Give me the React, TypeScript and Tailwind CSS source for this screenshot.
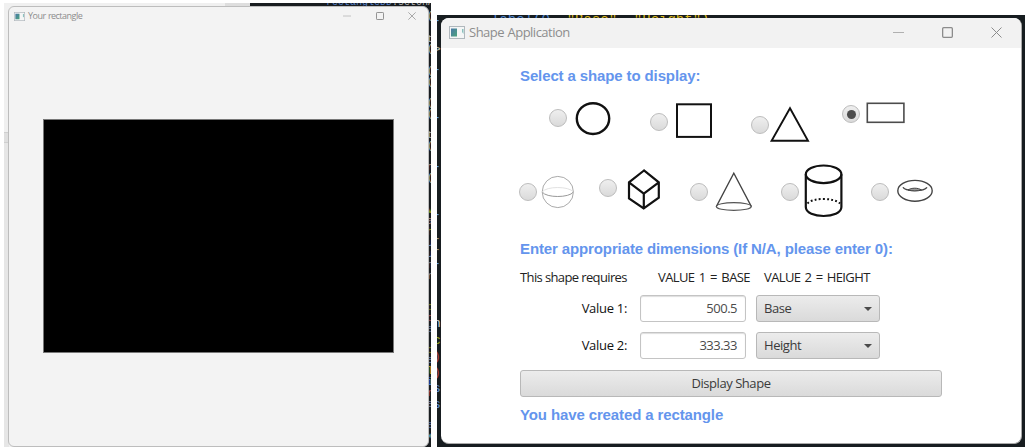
import type { ReactNode } from "react";

const uiFont = "font-['Open_Sans','Noto_Sans',sans-serif]";
const headingText =
  "flex h-5 items-center whitespace-nowrap font-['Liberation_Sans',Arial,sans-serif] text-[15px] font-bold tracking-[-0.12px] text-[#6495ed]";

function AppIcon({ className }: { className: string }) {
  return (
    <svg className={className} viewBox="0 0 16 13" preserveAspectRatio="none">
      <defs>
        <linearGradient id="app-icon" x1="0" y1="0" x2="1" y2="1">
          <stop offset="0" stopColor="#4a78a8" />
          <stop offset="1" stopColor="#4ba47c" />
        </linearGradient>
      </defs>
      <rect x="0.5" y="0.5" width="15" height="12" fill="#f4f6f6" stroke="#b0b8bd" />
      <rect x="2" y="2.5" width="6" height="8" fill="url(#app-icon)" />
      <path d="M13 3h1.5v5L13 6z" fill="#8ac0bd" />
    </svg>
  );
}

function WindowButtons({ className }: { className: string }) {
  return (
    <div className={className}>
      <svg className="h-full w-auto" viewBox="0 0 11 11" fill="none" stroke="#b0b0b0">
        <path d="M0 5.5h11" />
      </svg>
      <svg className="h-full w-auto" viewBox="0 0 11 11" fill="none" stroke="#8c8c8c" strokeWidth="1.3">
        <rect x="0.65" y="0.65" width="9.7" height="9.7" rx="1" />
      </svg>
      <svg className="h-full w-auto" viewBox="0 0 11 11" fill="none" stroke="#8c8c8c">
        <path d="M0.5 0.5l10 10M10.5 0.5l-10 10" />
      </svg>
    </div>
  );
}

function Radio({ className, checked = false }: { className: string; checked?: boolean }) {
  return (
    <span
      className={`${className} flex size-[18px] shrink-0 items-center justify-center rounded-full border border-[#bcbcbc] bg-linear-to-b from-[#efefef] to-[#dadada]`}
    >
      {checked && <span className="size-[9px] rounded-full bg-[#4c4c4c]" />}
    </span>
  );
}

function Shape({ className, box, children }: { className: string; box: string; children: ReactNode }) {
  return (
    <svg className={`${className} shrink-0`} viewBox={box} fill="none" stroke="#111">
      {children}
    </svg>
  );
}

function ValueRow({ label, value, unit, className }: { label: string; value: string; unit: string; className: string }) {
  return (
    <div className={`${className} flex h-[27px] items-center text-[13px]`}>
      <span className="w-[107px] pt-px text-right tracking-[-0.3px] text-[#111]">{label}</span>
      <span className="ml-[13px] flex h-[27px] w-[106px] items-center justify-end rounded-[3px] border border-[#c4c4c4] bg-white pt-px pr-2 tracking-[-0.5px] text-[#4b4b4b] shadow-[inset_0_1px_1px_#dedede]">
        {value}
      </span>
      <span className="ml-[10px] flex h-[27px] w-[124px] items-center justify-between rounded-[3px] border border-[#b8b8b8] bg-linear-to-b from-[#ececec] to-[#dadada] pt-px pr-[7px] pl-[7px] tracking-[-0.45px] text-[#3b3b3b]">
        {unit}
        <svg className="mb-px h-1 w-2" viewBox="0 0 8 4">
          <path d="M0 0h8L4 4z" fill="#4b4b4b" />
        </svg>
      </span>
    </div>
  );
}

const leftEdgeCode = [
  { ch: "(", pos: "top-[8px]", color: "text-[#a8b0b4]" },
  { ch: "t", pos: "top-[31px]", color: "text-[#a8b0b4]" },
  { ch: "(", pos: "top-[41px]", color: "text-[#a8b0b4]" },
  { ch: "(", pos: "top-[63px]", color: "text-[#a8b0b4]" },
  { ch: "(", pos: "top-[74px]", color: "text-[#a8b0b4]" },
  { ch: "(", pos: "top-[95px]", color: "text-[#a8b0b4]" },
  { ch: "(", pos: "top-[106px]", color: "text-[#a8b0b4]" },
  { ch: "t", pos: "top-[127px]", color: "text-[#a8b0b4]" },
  { ch: "(", pos: "top-[138px]", color: "text-[#a8b0b4]" },
  { ch: "n", pos: "top-[159px]", color: "text-[#bb9980]" },
  { ch: "(", pos: "top-[170px]", color: "text-[#a8b0b4]" },
  { ch: "v", pos: "top-[202px]", color: "text-[#9aa51c]" },
  { ch: "a", pos: "top-[213px]", color: "text-[#b59080]" },
  { ch: "h", pos: "top-[224px]", color: "text-[#9aa51c]" },
  { ch: "u", pos: "top-[235px]", color: "text-[#6f93c8]" },
  { ch: "u", pos: "top-[246px]", color: "text-[#6f93c8]" },
  { ch: "n", pos: "top-[257px]", color: "text-[#878b93]" },
  { ch: "r", pos: "top-[268px]", color: "text-[#878b93]" },
  { ch: "o", pos: "top-[299px]", color: "text-[#7c831e]" },
  { ch: "c", pos: "top-[310px]", color: "text-[#a94d50]" },
  { ch: "e", pos: "top-[321px]", color: "text-[#5e7394]" },
  { ch: "c", pos: "top-[342px]", color: "text-[#7c831e]" },
  { ch: "e", pos: "top-[352px]", color: "text-[#6583ac]" },
  { ch: "l", pos: "top-[363px]", color: "text-[#c8a21c]" },
  { ch: "i", pos: "top-[374px]", color: "text-[#4a82d0]" },
  { ch: "r", pos: "top-[385px]", color: "text-[#a94d50]" },
  { ch: "e", pos: "top-[396px]", color: "text-[#7984a0]" },
  { ch: "e", pos: "top-[417px]", color: "text-[#526da5]" },
  { ch: "x", pos: "top-[428px]", color: "text-[#5ea0b0]" },
];

const rightEdgeCode = [
  { ch: "-", pos: "top-[1px]", color: "text-[#5b9cf0]" },
  { ch: ">", pos: "top-[30px]", color: "text-[#b8b8a8]" },
  { ch: "-", pos: "top-[50px]", color: "text-[#5b9cf0]" },
  { ch: "-", pos: "top-[98px]", color: "text-[#5b9cf0]" },
  { ch: "-", pos: "top-[147px]", color: "text-[#5b9cf0]" },
  { ch: "-", pos: "top-[195px]", color: "text-[#5b9cf0]" },
  { ch: "-", pos: "top-[219px]", color: "text-[#a89f83]" },
  { ch: "-", pos: "top-[230px]", color: "text-[#a89f83]" },
  { ch: "-", pos: "top-[244px]", color: "text-[#5b9cf0]" },
  { ch: "n", pos: "top-[304px]", color: "text-[#d0d0d0]" },
  { ch: "c", pos: "top-[321px]", color: "text-[#9aa51c]" },
  { ch: ")", pos: "top-[337px]", color: "text-[#b9494c]" },
  { ch: ")", pos: "top-[353px]", color: "text-[#b9494c]" },
  { ch: "s", pos: "top-[369px]", color: "text-[#6090d8]" },
  { ch: "s", pos: "top-[385px]", color: "text-[#6090d8]" },
];

function RectangleWindow() {
  return (
    <section className="relative mt-[3px] ml-1 flex h-[444px] w-[427px] shrink-0 overflow-hidden bg-[#191d20] font-['Liberation_Mono',monospace]">
      <div className="flex w-[246px] flex-col bg-linear-to-r from-[#f0f0f0] from-90% to-[#dedede] to-90%">
        <div className="mt-[129px] h-[11px] w-[5px] border-y border-[#cfcfcf] bg-[#dfdfdf]" />
        <div className="w-[5px] flex-1 bg-[#e6e6e6]" />
      </div>
      <span className="absolute top-[-5px] left-[322px] text-[10px] leading-[10px] text-[#5580c8]">
        rectangleDD<span className="text-[#b5b5b5]">.setOnAc</span>
      </span>
      {leftEdgeCode.map((c) => (
        <span key={c.pos} className={`${c.pos} ${c.color} absolute left-[423px] text-[10px] leading-[12px]`}>
          {c.ch}
        </span>
      ))}
      <span className="absolute top-[441px] left-[250px] text-[10px] leading-[10px] text-[#638b99]">
        rectangle.setStyle(color);
      </span>
      <div className="absolute top-[3px] left-1 flex h-[441px] w-[421px] flex-col rounded-md border border-[#bdbdbd] bg-[#f3f3f3]">
        <header className={`${uiFont} flex h-[18px] shrink-0 items-center pl-[5px]`}>
          <AppIcon className="h-[9px] w-[11px]" />
          <span className="ml-[3px] text-[9px] tracking-[-0.52px] [word-spacing:0.5px] text-[#8d8d8d]">Your rectangle</span>
          <WindowButtons className="mr-3 ml-auto flex h-2 gap-[24.5px]" />
        </header>
        <div className="mt-[94px] ml-[34px] h-[234px] w-[351px] border border-[#777] bg-black" />
      </div>
    </section>
  );
}

function ShapeWindow() {
  return (
    <section className="relative mt-[15px] ml-[6px] h-[432px] w-[588px] shrink-0 overflow-hidden bg-[#171d20] font-['Liberation_Mono',monospace]">
      <span className="absolute top-[-2px] left-[54px] text-[14px] leading-[14px] whitespace-pre text-[#4c83cc]">
        label(0, <span className="text-[#d9b51c]">"Base", "Height")</span>
      </span>
      {rightEdgeCode.map((c) => (
        <span key={c.pos} className={`${c.pos} ${c.color} absolute left-[-4px] text-[13px] leading-[10px]`}>
          {c.ch}
        </span>
      ))}
      <div
        className={`${uiFont} absolute top-[3px] left-1 flex h-[426px] w-[581px] flex-col overflow-hidden rounded-lg border-r border-b border-[#aaa] bg-white`}
      >
        <header className="flex h-[30px] shrink-0 items-center bg-[#f2f2f2] pb-px pl-2">
          <AppIcon className="h-[13px] w-4" />
          <span className="ml-1 text-[13px] tracking-[-0.5px] [word-spacing:0.5px] text-[#8d8d8d]">Shape Application</span>
          <WindowButtons className="mr-[19px] ml-auto flex h-[11px] gap-[38px]" />
        </header>
        <main className="pl-[79px]">
          <h2 className={`${headingText} mt-[18px]`}>Select a shape to display:</h2>
          <div className="mt-[10px] flex h-[54px] items-start">
            <Radio className="mt-[13px] ml-[29px]" />
            <Shape className="mt-[5px] ml-2 h-9 w-9" box="575 101 36 36">
              <ellipse cx="593" cy="118.6" rx="16.2" ry="15.4" strokeWidth="2.4" />
            </Shape>
            <Radio className="mt-[17px] ml-[39px]" />
            <Shape className="mt-[6px] ml-[7px] h-[38px] w-[38px]" box="675 102 38 38">
              <rect x="677" y="104.3" width="34" height="32.6" strokeWidth="2" />
            </Shape>
            <Radio className="mt-5 ml-[38px]" />
            <Shape className="mt-[9px] h-[39px] w-[41px]" box="769 105 41 39">
              <path d="M790 108.3L771.6 140.7H808z" strokeWidth="1.9" />
            </Shape>
            <Radio className="mt-[9px] ml-8" checked />
            <Shape className="mt-[5px] ml-[5px] h-6 w-[41px]" box="865 101 41 24">
              <rect x="867.3" y="103.3" width="36.6" height="19" stroke="#4c4c4c" strokeWidth="1.6" />
            </Shape>
          </div>
          <div className="mt-[10px] flex h-[62px] items-start">
            <Radio className="mt-[23px] -ml-px" />
            <Shape className="mt-[15px] ml-1 h-[34px] w-[34px]" box="541 175 34 34">
              <g stroke="#aaa">
                <circle cx="557.8" cy="192" r="15.6" />
                <path d="M542.2 192c4 6 27 6 31.2 0" stroke="#999" />
                <path d="M542.2 192c4-6 27-6 31.2 0" stroke="#e2e2e2" />
              </g>
            </Shape>
            <Radio className="mt-[19px] ml-6" />
            <Shape className="mt-2 ml-[9px] h-[43px] w-9" box="626 168 36 43">
              <path
                d="M644 170.5L629 182.3V198.3L643.7 208.4L658.8 197.7V182.3zM629 182.3L643.8 193.7L658.8 182.3M643.8 193.7V208.4"
                strokeWidth="2.2"
              />
            </Shape>
            <Radio className="mt-[23px] ml-7" />
            <Shape className="mt-[11px] ml-[6px] h-[42px] w-10" box="714 171 40 42">
              <path d="M716.3 206.6L733.8 173.2L751.4 206.6" stroke="#444" strokeWidth="1.3" />
              <ellipse cx="733.8" cy="206.5" rx="17.5" ry="3.9" stroke="#555" strokeWidth="1.2" />
            </Shape>
            <Radio className="mt-[23px] ml-[27px]" />
            <Shape className="mt-[3px] ml-1 h-14 w-[41px]" box="803 163 41 56">
              <g strokeWidth="2.2">
                <ellipse cx="823.6" cy="174.3" rx="17.8" ry="8.8" />
                <path d="M805.8 174.3V207c0 12 35.6 12 35.6 0V174.3" />
                <path d="M807.5 203.5c5-6 27-6 32.5 0" strokeDasharray="1.9 2.2" strokeWidth="2" />
              </g>
            </Shape>
            <Radio className="mt-[23px] ml-[27px]" />
            <Shape className="mt-[19px] ml-[7px] h-[25px] w-[39px]" box="896 179 39 25">
              <g stroke="#444" strokeWidth="1.4">
                <ellipse cx="915" cy="190.8" rx="17.2" ry="10.4" />
                <path d="M903 187.3c2 4.3 21 4.3 24 0" />
                <path d="M908 190c3.5-2.4 10-2.4 13.5 0c-3.5 1.2-10 1.2-13.5 0z" fill="#999" strokeWidth="1" />
              </g>
            </Shape>
          </div>
          <h2 className={`${headingText} mt-[17px]`}>Enter appropriate dimensions (If N/A, please enter 0):</h2>
          <p className="mt-2 flex h-5 items-center pt-px text-[13px] whitespace-nowrap text-[#222]">
            <span className="w-[138px] tracking-[-0.62px]">This shape requires</span>
            <span className="w-[106px] tracking-[-0.62px] [word-spacing:1.7px]">VALUE 1 = BASE</span>
            <span className="tracking-[-0.62px] [word-spacing:1.5px]">VALUE 2 = HEIGHT</span>
          </p>
          <ValueRow className="mt-2" label="Value 1:" value="500.5" unit="Base" />
          <ValueRow className="mt-[10px]" label="Value 2:" value="333.33" unit="Height" />
          <button className="mt-[11px] flex h-[27px] w-[422px] items-center justify-center rounded-[3px] border border-[#b8b8b8] bg-linear-to-b from-[#ececec] to-[#dadada] pt-px text-[13px] tracking-[-0.45px] text-[#3b3b3b]">
            Display Shape
          </button>
          <h2 className={`${headingText} mt-2`}>You have created a rectangle</h2>
        </main>
      </div>
    </section>
  );
}

export default function App() {
  return (
    <div className="flex h-[447px] w-[1036px] overflow-hidden bg-white">
      <RectangleWindow />
      <ShapeWindow />
    </div>
  );
}
